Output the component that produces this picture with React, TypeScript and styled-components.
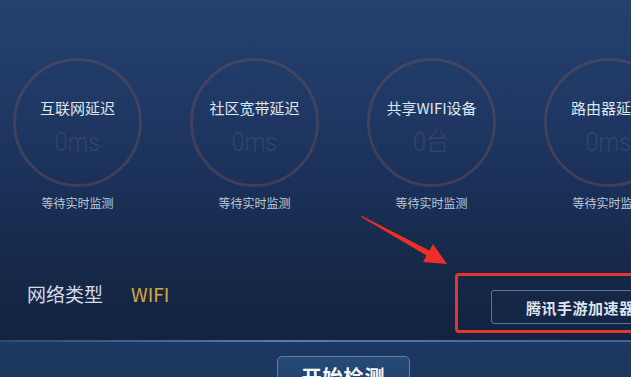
import React from "react";
import styled, { createGlobalStyle } from "styled-components";

const GlobalStyle = createGlobalStyle`
  html, body {
    margin: 0;
    padding: 0;
    background: #142443;
  }
  * {
    box-sizing: border-box;
  }
`;

const cjk = `"Noto Sans CJK SC", "Noto Sans", sans-serif`;

const Styles = {
  Page: styled.div`
    position: relative;
    width: 631px;
    height: 377px;
    overflow: hidden;

    display: flex;
    flex-direction: column;

    font-family: ${cjk};
    background: linear-gradient(
      180deg,
      #24426f 0%,
      #1f3864 28%,
      #1a3058 50%,
      #162949 70%,
      #132341 90%
    );
  `,

  GaugeRow: styled.div`
    display: flex;
    gap: 48px;
    padding: 58px 0 0 13px;
  `,

  Gauge: styled.div`
    flex-shrink: 0;
    width: 129px;

    display: flex;
    flex-direction: column;
    align-items: center;
  `,

  Ring: styled.div`
    width: 129px;
    height: 129px;
    border-radius: 50%;
    border: 3px solid rgba(112, 84, 88, 0.42);

    display: flex;
    flex-direction: column;
    align-items: center;
    padding-top: 37px;
  `,

  GaugeTitle: styled.div`
    font-size: 15px;
    line-height: 20px;
    color: #dfe5ef;
    white-space: nowrap;
  `,

  GaugeValue: styled.div`
    margin-top: 9px;
    font-family: Roboto, "Noto Sans CJK SC", sans-serif;
    font-weight: 300;
    font-size: 26px;
    line-height: 30px;
    color: #33466a;
    white-space: nowrap;
    transform: scaleX(0.9);
  `,

  Caption: styled.div`
    margin-top: 8px;
    font-size: 12px;
    line-height: 16px;
    color: #bfc8d8;
    white-space: nowrap;
  `,

  InfoRow: styled.div`
    margin-top: 62px;
    height: 60px;

    display: flex;
    align-items: flex-start;
    justify-content: space-between;
  `,

  NetType: styled.div`
    padding: 8px 0 0 27px;
    display: flex;
    gap: 28px;
    font-size: 19px;
    line-height: 26px;
  `,

  NetLabel: styled.span`
    color: #d3dae6;
  `,

  NetValue: styled.span`
    color: #d8a93a;
  `,

  Highlight: styled.div`
    flex-shrink: 0;
    width: 196px;
    height: 60px;
    margin-right: -20px;
    padding: 14px 0 0 33px;

    border: 3px solid #e6342e;
    border-radius: 4px;
  `,

  AccelButton: styled.div`
    height: 34px;
    padding-left: 34px;

    display: flex;
    align-items: center;

    border: 1.5px solid #56749f;
    border-radius: 3px;
    background: rgba(22, 40, 70, 0.7);

    font-size: 15px;
    font-weight: 700;
    letter-spacing: 0.5px;
    color: #dde4ef;
    white-space: nowrap;
  `,

  BottomBand: styled.div`
    position: relative;
    flex: 1;
    margin-top: 7px;
    padding: 16px 0 0 277px;

    background: linear-gradient(180deg, #1d3961 0%, #1b345a 100%);

    &::before {
      content: "";
      position: absolute;
      left: 0;
      right: 0;
      top: 0;
      height: 2px;
      background: linear-gradient(
        90deg,
        rgba(80, 115, 165, 0.3) 0%,
        rgba(100, 140, 190, 0.8) 45%,
        rgba(90, 125, 175, 0.6) 100%
      );
    }
  `,

  StartButton: styled.div`
    width: 133px;
    height: 44px;
    padding-top: 6px;

    border: 1.5px solid #5f7fab;
    border-radius: 5px;
    background: linear-gradient(180deg, #274a78 0%, #1f3d66 100%);

    text-align: center;
    font-size: 20px;
    font-weight: 700;
    line-height: 28px;
    letter-spacing: 1px;
    color: #f4f7fb;
  `,

  Arrow: styled.svg`
    position: absolute;
    left: 0;
    top: 0;
    pointer-events: none;
  `,
};

const gauges = [
  { title: "互联网延迟", value: "0ms" },
  { title: "社区宽带延迟", value: "0ms" },
  { title: "共享WIFI设备", value: "0台" },
  { title: "路由器延迟", value: "0ms" },
];

export default function App() {
  return (
    <>
      <GlobalStyle />
      <Styles.Page>
        <Styles.GaugeRow>
          {gauges.map((g) => (
            <Styles.Gauge key={g.title}>
              <Styles.Ring>
                <Styles.GaugeTitle>{g.title}</Styles.GaugeTitle>
                <Styles.GaugeValue>{g.value}</Styles.GaugeValue>
              </Styles.Ring>
              <Styles.Caption>等待实时监测</Styles.Caption>
            </Styles.Gauge>
          ))}
        </Styles.GaugeRow>

        <Styles.InfoRow>
          <Styles.NetType>
            <Styles.NetLabel>网络类型</Styles.NetLabel>
            <Styles.NetValue>WIFI</Styles.NetValue>
          </Styles.NetType>
          <Styles.Highlight>
            <Styles.AccelButton>腾讯手游加速器</Styles.AccelButton>
          </Styles.Highlight>
        </Styles.InfoRow>

        <Styles.BottomBand>
          <Styles.StartButton>开始检测</Styles.StartButton>
        </Styles.BottomBand>

        {/* annotation arrow */}
        <Styles.Arrow width="631" height="377" viewBox="0 0 631 377">
          <polygon
            points="361,215.5 429.5,250.4 433,244 447,264 423,262 426.5,255.6 362,217.5"
            fill="#ec2f28"
          />
        </Styles.Arrow>
      </Styles.Page>
    </>
  );
}
